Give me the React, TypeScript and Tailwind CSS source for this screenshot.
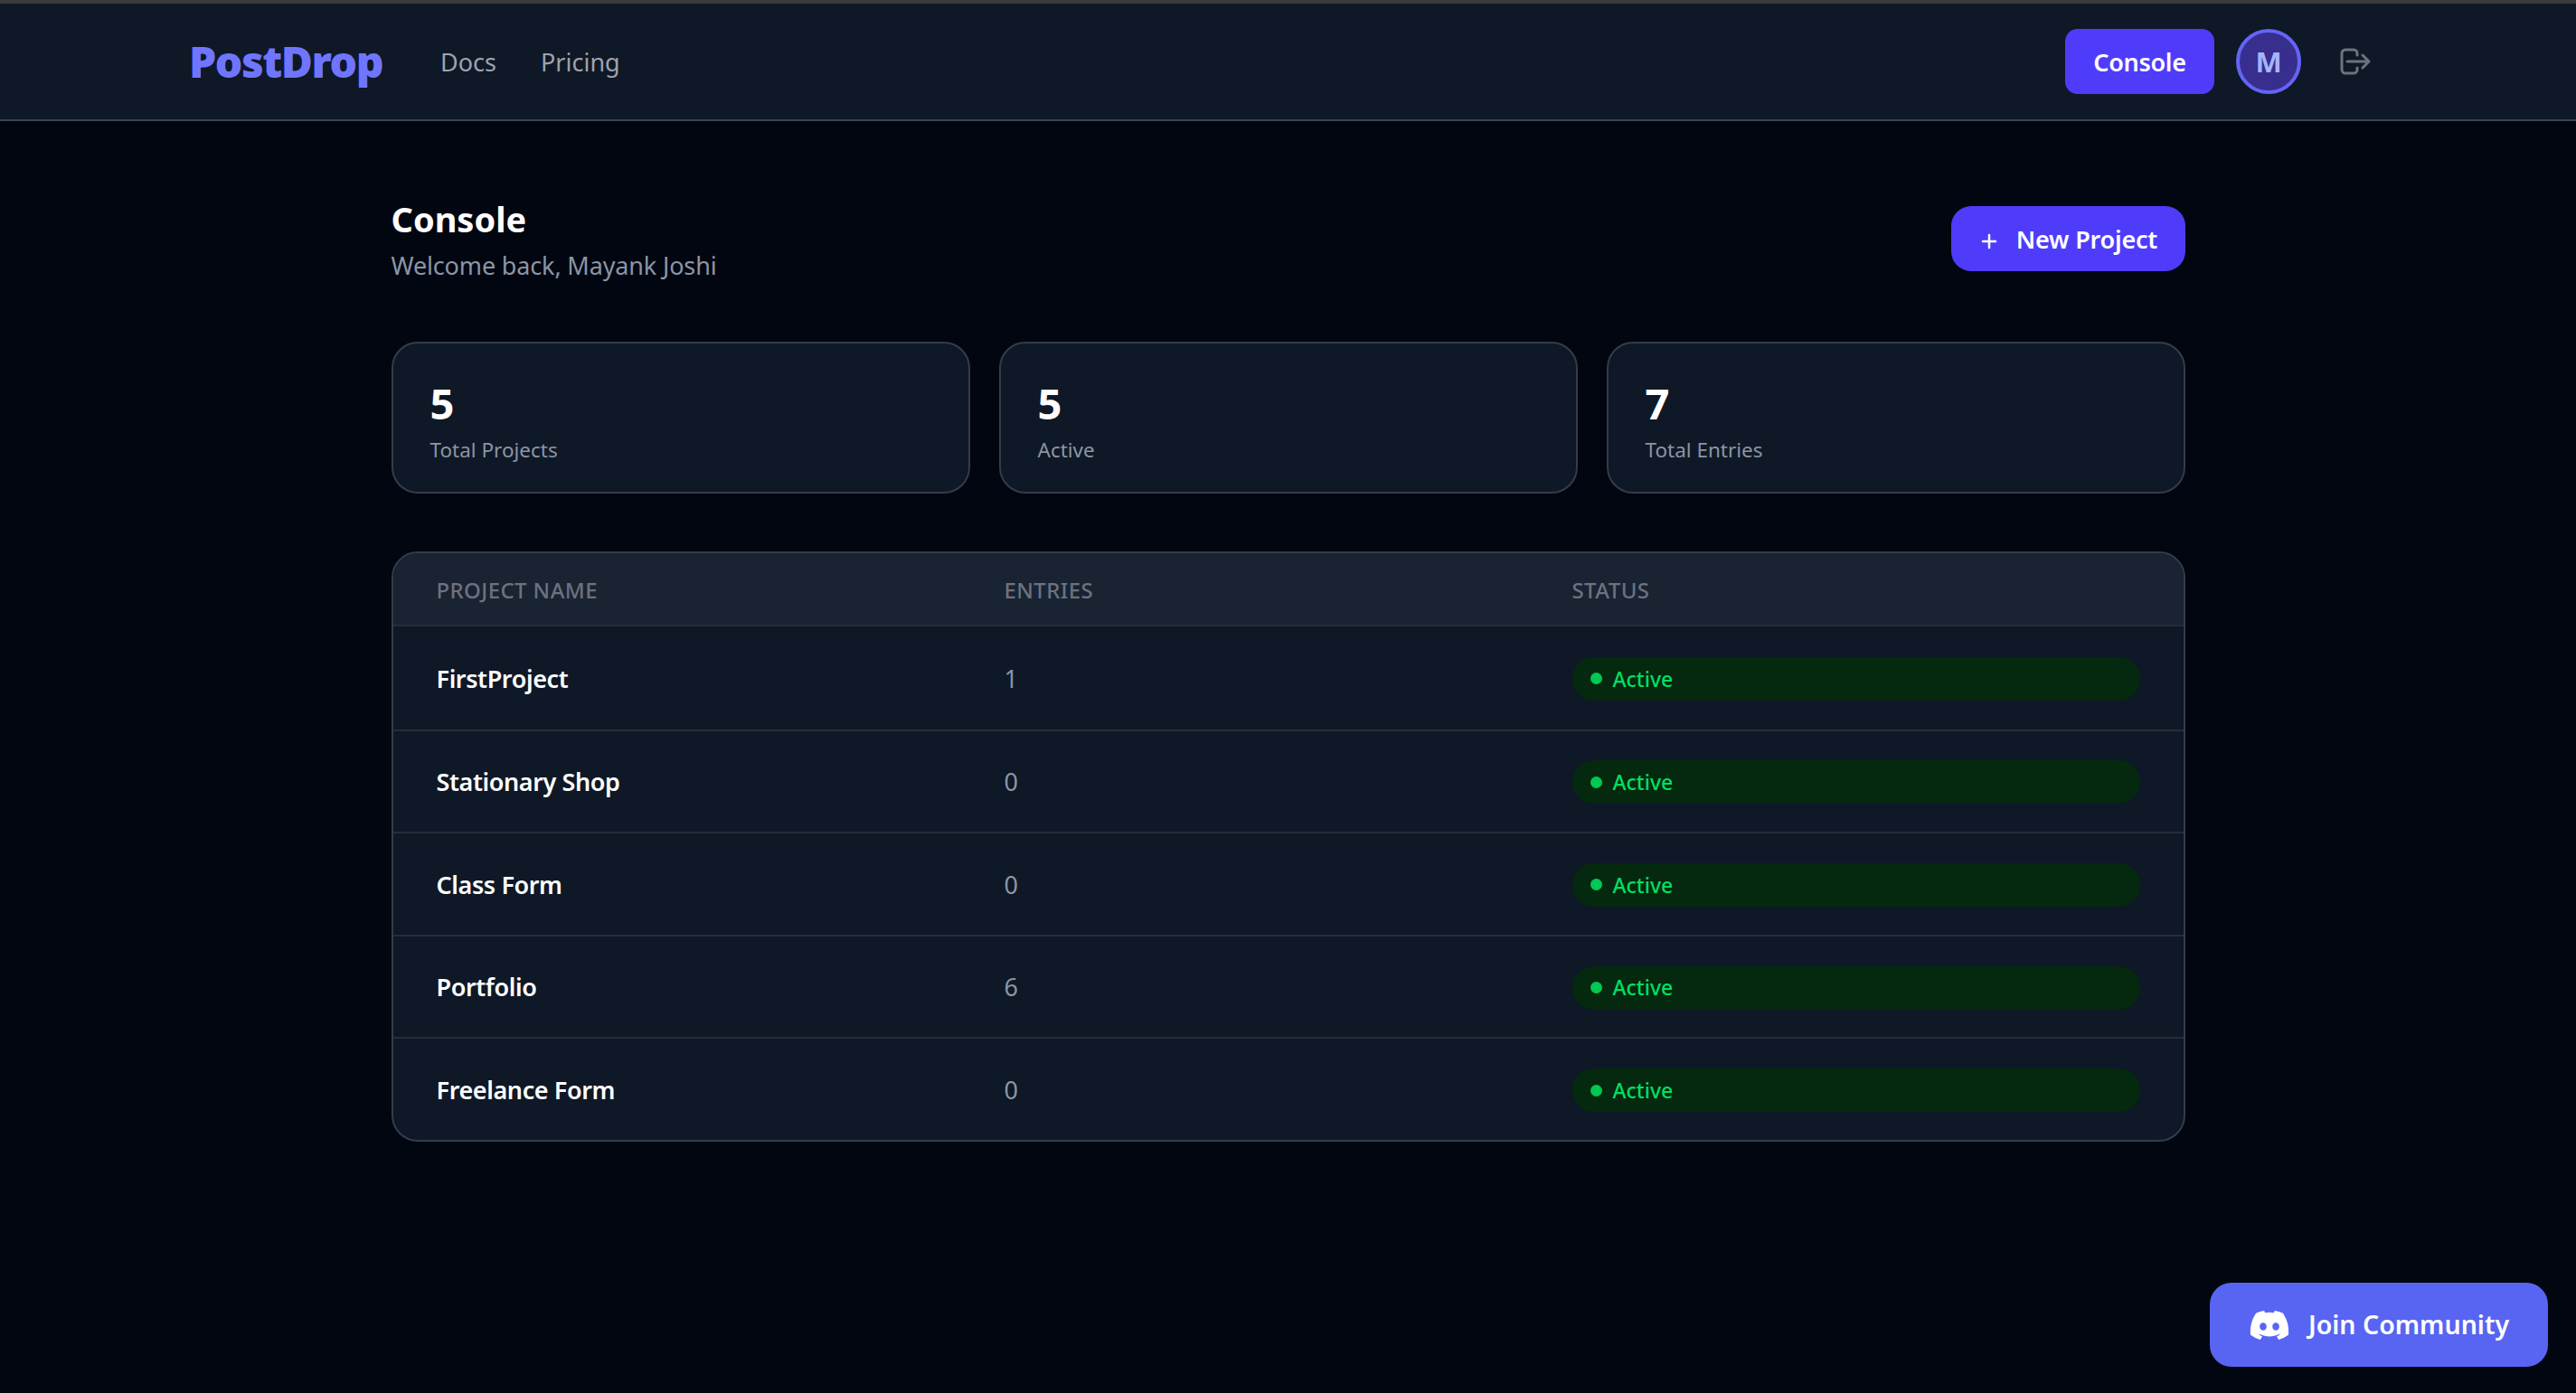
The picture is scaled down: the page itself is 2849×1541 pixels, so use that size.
import { Plus } from "lucide-react";
import { FaDiscord } from "react-icons/fa";

const stats = [
  { value: "5", label: "Total Projects" },
  { value: "5", label: "Active" },
  { value: "7", label: "Total Entries" },
];

const projects = [
  { name: "FirstProject", entries: 1 },
  { name: "Stationary Shop", entries: 0 },
  { name: "Class Form", entries: 0 },
  { name: "Portfolio", entries: 6 },
  { name: "Freelance Form", entries: 0 },
];

const LogoutIcon = () => (
  <svg viewBox="0 0 34 30" fill="none" stroke="currentColor" strokeWidth="3" strokeLinecap="round" strokeLinejoin="round" className="h-[30px] w-[34px]">
    <path d="M19 8V6a4 4 0 0 0-4-4H6a4 4 0 0 0-4 4v18a4 4 0 0 0 4 4h9a4 4 0 0 0 4-4v-2" />
    <path d="M8 15h24M25 8l7 7-7 7" />
  </svg>
);

export default function App() {
  return (
    <div className="min-h-[1541px] bg-[#020610] font-['Noto_Sans','Open_Sans',sans-serif]">
      <div className="h-1 bg-[#3a3a3f]" />

      {/* Navbar */}
      <header className="flex h-[130px] items-center justify-between border-b-2 border-[#3a4252] bg-[#0f1826] px-[211px]">
        <div className="flex items-center gap-[64px]">
          <span className="-ml-[2px] text-[48px] font-black tracking-[-1.5px] text-[#7075ff]">PostDrop</span>
          <nav className="mt-[2px] flex items-center gap-[49px] text-[27px] text-[#9ca3af]">
            <span>Docs</span>
            <span>Pricing</span>
          </nav>
        </div>
        <div className="flex items-center">
          <button className="flex h-[72px] w-[165px] items-center justify-center rounded-[14px] bg-[#4f3cfb] pt-[2px] text-[27px] font-semibold tracking-[-0.3px] text-white">
            Console
          </button>
          <div className="ml-6 flex h-[72px] w-[72px] items-center justify-center rounded-full border-4 border-[#6464f5] bg-[#372e8e] text-[31px] font-bold text-[#a5b4fc]">
            M
          </div>
          <button className="ml-[43px] mr-4 text-[#6b7280]">
            <LogoutIcon />
          </button>
        </div>
      </header>

      <main className="mx-auto w-[1984px] pt-[82px]">
        <div className="flex items-start justify-between">
          <div>
            <h1 className="text-[38px] leading-[52px] font-bold text-white">Console</h1>
            <p className="mt-[6px] text-[27px] leading-[40px] tracking-[-0.15px] text-[#8b95a5]">Welcome back, Mayank Joshi</p>
          </div>
          <button className="mt-3 flex h-[72px] w-[259px] items-center justify-center gap-[18px] rounded-[22px] bg-[#4f3cfb] pt-[2px] text-[27px] font-semibold tracking-[-0.2px] text-white">
            <Plus size={24} strokeWidth={2.5} className="mt-[4px]" />
            New Project
          </button>
        </div>

        {/* Stats */}
        <section className="mt-[64px] grid grid-cols-3 gap-8">
          {stats.map((s) => (
            <div key={s.label} className="h-[168px] rounded-[29px] border-2 border-[#343c4c] bg-[#0f1826] px-[41px] pt-[37px]">
              <div className="text-[47px] leading-[58px] font-bold text-white">{s.value}</div>
              <div className="mt-[6px] text-[22.5px] leading-[34px] text-[#8b95a5]">{s.label}</div>
            </div>
          ))}
        </section>

        {/* Projects table */}
        <section className="mt-[64px] overflow-hidden rounded-[29px] border-2 border-[#343c4c] bg-[#0f1826]">
          <div className="grid h-[81px] grid-cols-3 items-center border-b-2 border-[#252d3b] bg-[#1a2332] px-[48px] pt-[2px] text-[24px] font-medium tracking-[0.4px] text-[#6b7280] uppercase">
            <span>Project Name</span>
            <span>Entries</span>
            <span>Status</span>
          </div>
          {projects.map((p, i) => (
            <div key={p.name} className={`grid h-[113.6px] grid-cols-3 items-center px-[48px] pt-[2px] ${i > 0 ? "border-t-2 border-[#252d3b]" : ""}`}>
              <span className="text-[27px] font-semibold tracking-[-0.4px] text-white">{p.name}</span>
              <span className="text-[27px] text-[#8b95a5]">{p.entries}</span>
              <span className="flex h-[48px] items-center gap-[12px] rounded-full bg-[#04290f] pl-[20px] text-[23px] font-medium text-[#00df62]">
                <span className="h-[13px] w-[13px] rounded-full bg-[#00c853]" />
                Active
              </span>
            </div>
          ))}
        </section>
      </main>

      <button className="fixed right-[31px] bottom-[29px] flex h-[93px] w-[374px] items-center justify-center gap-5 rounded-[24px] bg-[#5865f2] text-[28.5px] font-semibold text-white">
        <FaDiscord size={46} />
        Join Community
      </button>
    </div>
  );
}
